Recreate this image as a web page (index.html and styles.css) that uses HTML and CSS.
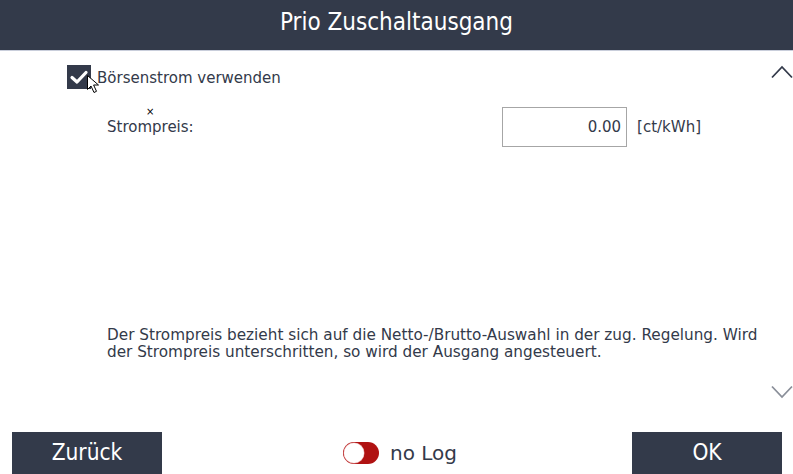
FILE: index.html
```html
<!DOCTYPE html>
<html lang="de">
<head>
<meta charset="utf-8">
<title>Prio Zuschaltausgang</title>
<link rel="stylesheet" href="styles.css">
</head>
<body>
<div class="screen">
  <header class="title-bar">Prio Zuschaltausgang</header>
  <main class="content">
    <label class="check-row">
      <span class="checkbox">
        <svg width="24" height="24" viewBox="0 0 24 24"><path d="M5 12.5 L10 17 L19 7.5" fill="none" stroke="#fff" stroke-width="3.2" stroke-linecap="round" stroke-linejoin="round"/></svg>
      </span>
      <span class="check-label">Börsenstrom verwenden</span>
    </label>
    <div class="field-row">
      <span class="field-label">Strompreis:</span>
      <span class="field-right">
        <span class="input-box">0.00</span>
        <span class="unit">[ct/kWh]</span>
      </span>
    </div>
    <p class="description">Der Strompreis bezieht sich auf die Netto-/Brutto-Auswahl in der zug. Regelung. Wird der Strompreis unterschritten, so wird der Ausgang angesteuert.</p>

    <div class="tiny-x">×</div>
    <svg class="chev chev-up" width="22" height="14" viewBox="0 0 22 14"><path d="M1 12.5 L11 2 L21 12.5" fill="none" stroke="#333a4a" stroke-width="1.8"/></svg>
    <svg class="chev chev-down" width="22" height="14" viewBox="0 0 22 14"><path d="M1 1.5 L11 12 L21 1.5" fill="none" stroke="#8a8f99" stroke-width="1.8"/></svg>
    <svg class="cursor" width="16" height="20" viewBox="0 0 16 20"><path d="M0.5 0.5 L0.5 14.5 L4 11 L7 17.5 L9.5 16.3 L6.6 10 L11.5 10 Z" fill="#fff" stroke="#000" stroke-width="1"/></svg>
  </main>
  <footer class="bottom-bar">
    <button class="btn">Zurück</button>
    <div class="log-toggle">
      <span class="toggle"><span class="knob"></span></span>
      <span class="log-label">no Log</span>
    </div>
    <button class="btn">OK</button>
  </footer>
</div>
</body>
</html>
```
FILE: styles.css
```css
html, body {
  margin: 0;
  padding: 0;
  background: #fff;
}
.screen {
  width: 793px;
  height: 474px;
  display: flex;
  flex-direction: column;
  font-family: "DejaVu Sans", sans-serif;
  color: #333a4a;
  overflow: hidden;
}
.title-bar {
  height: 51px;
  flex: none;
  background: #333a4a;
  border-bottom: 1px solid #c9cedb;
  color: #fff;
  font-family: "DejaVu Sans Condensed", "DejaVu Sans", sans-serif;
  font-size: 24px;
  display: flex;
  align-items: center;
  justify-content: center;
  padding-bottom: 7px;
  box-sizing: border-box;
}
.content {
  flex: 1;
  position: relative;
  padding: 14px 0 0 67px;
  display: flex;
  flex-direction: column;
}
.check-row {
  display: flex;
  align-items: center;
  height: 24px;
}
.checkbox {
  width: 24px;
  height: 24px;
  background: #333a4a;
  display: block;
  flex: none;
}
.checkbox svg { display: block; }
.check-label {
  font-size: 15px;
  margin-left: 6px;
  padding-top: 2px;
}
.tiny-x {
  position: absolute;
  left: 146px;
  top: 56px;
  font-size: 10px;
  line-height: 10px;
  color: #000;
}
.field-row {
  display: flex;
  align-items: center;
  justify-content: space-between;
  margin: 18px 0 0 40px;
  width: 594px;
}
.field-label {
  font-size: 15px;
}
.field-right {
  display: flex;
  align-items: center;
}
.input-box {
  width: 125px;
  height: 40px;
  box-sizing: border-box;
  border: 1px solid #a6a6a6;
  display: flex;
  align-items: center;
  justify-content: flex-end;
  padding-right: 5px;
  font-size: 15px;
}
.unit {
  font-size: 15px;
  margin-left: 10px;
}
.description {
  margin: 180px 0 0 40px;
  width: 660px;
  font-size: 15.25px;
  line-height: 17px;
}
.chev {
  position: absolute;
  right: 0;
}
.chev-up { top: 14px; }
.chev-down { top: 334px; }
.cursor {
  position: absolute;
  left: 87px;
  top: 24px;
}
.bottom-bar {
  height: 42px;
  flex: none;
  display: flex;
  align-items: center;
  justify-content: space-between;
  padding: 0 11px 0 12px;
}
.btn {
  width: 150px;
  height: 42px;
  background: #333a4a;
  color: #fff;
  border: 0;
  font-family: "DejaVu Sans Condensed", "DejaVu Sans", sans-serif;
  font-size: 22.5px;
  padding: 0 0 2px;
}
.log-toggle {
  display: flex;
  align-items: center;
  margin-left: 6px;
}
.toggle {
  width: 36px;
  height: 22px;
  border-radius: 11px;
  background: #b01212;
  display: flex;
  align-items: center;
  padding-left: 1px;
  box-sizing: border-box;
}
.knob {
  width: 20px;
  height: 20px;
  border-radius: 50%;
  background: #fff;
  box-shadow: 0 0 0 0.5px #e8a0a0;
}
.log-label {
  font-size: 20px;
  margin-left: 11px;
}
```
